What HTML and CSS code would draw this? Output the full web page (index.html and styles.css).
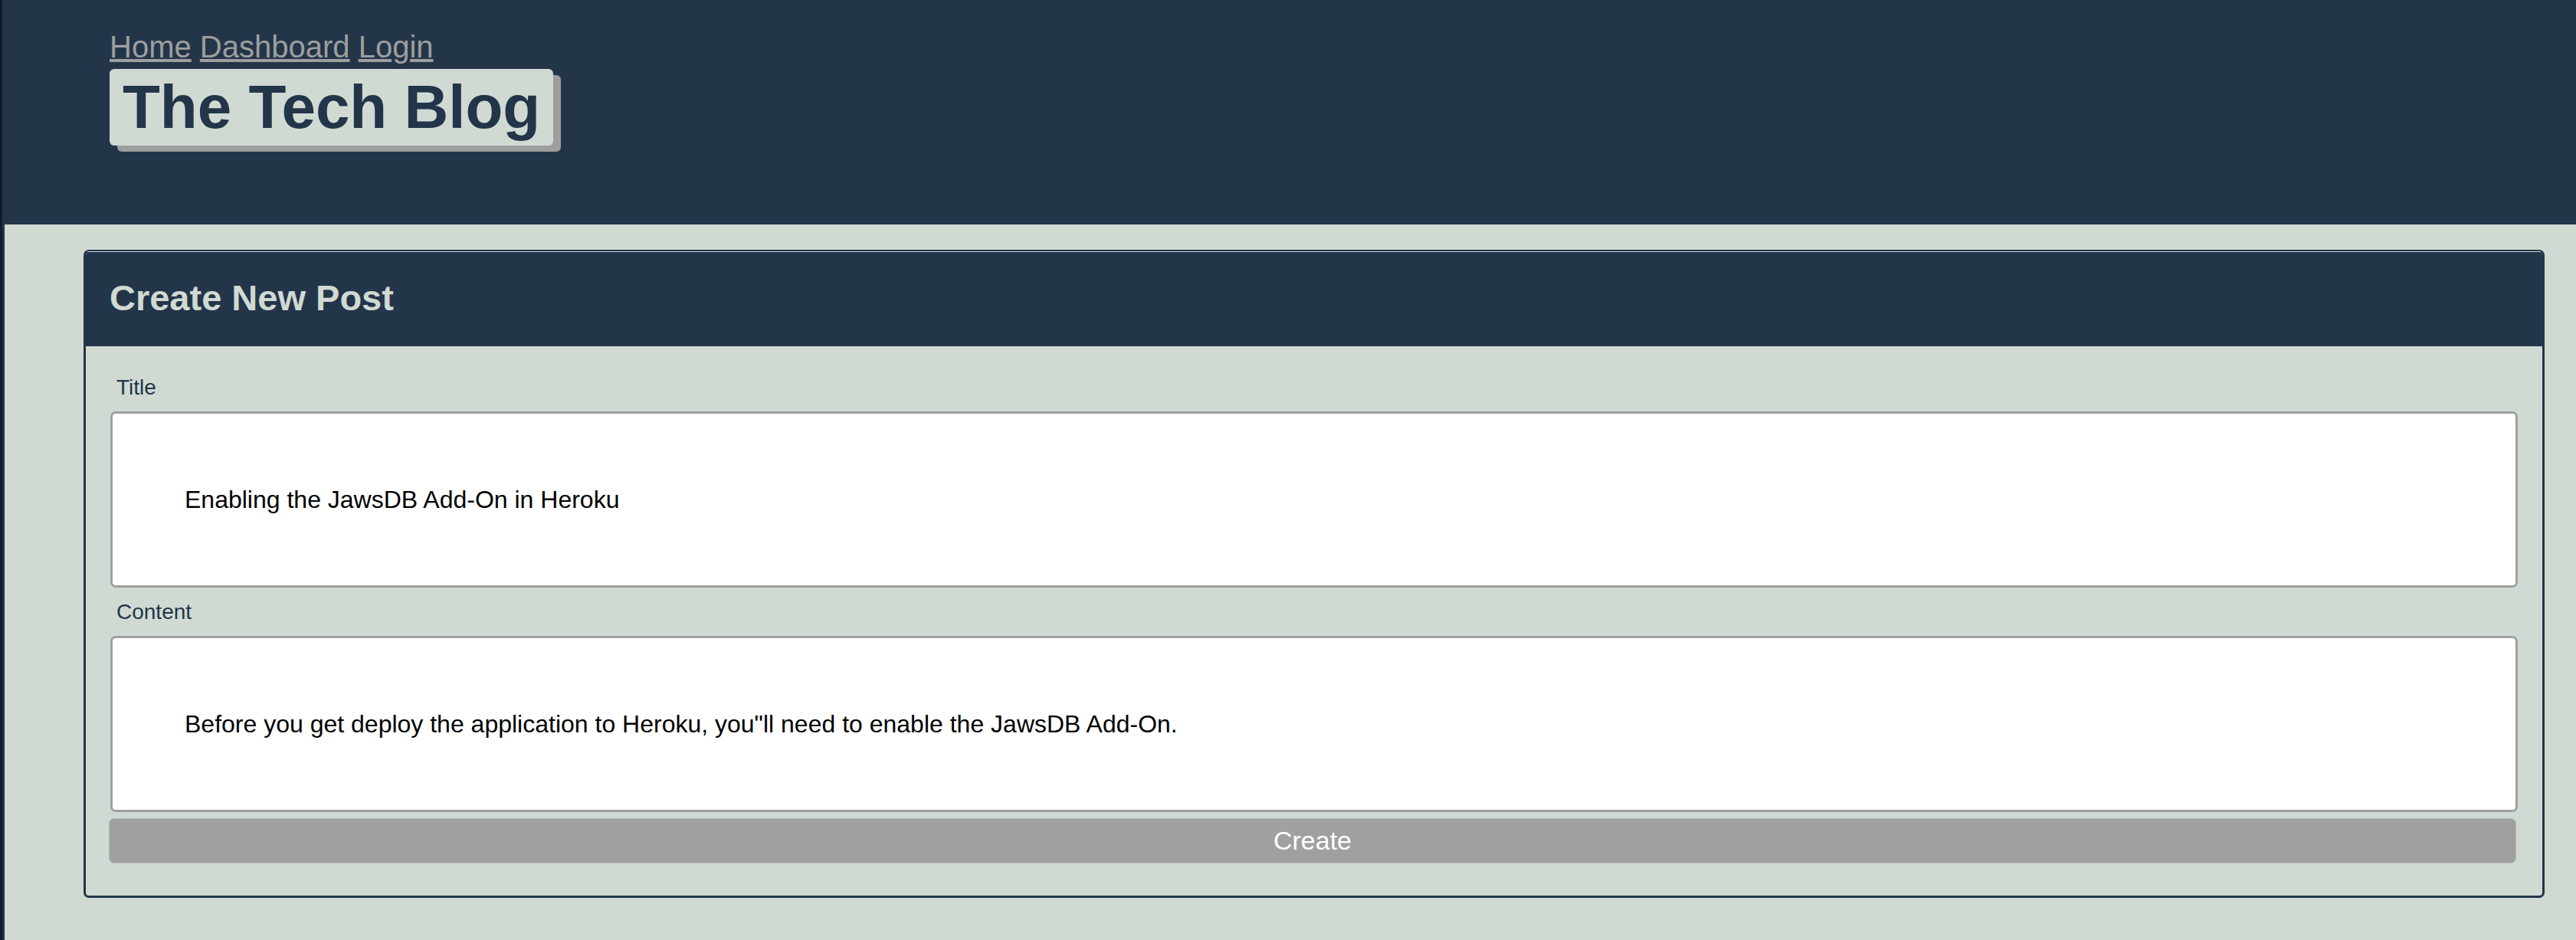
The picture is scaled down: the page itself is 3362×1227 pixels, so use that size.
FILE: index.html
```html
<!DOCTYPE html>
<html lang="en">
<head>
<meta charset="utf-8">
<title>The Tech Blog</title>
<link rel="stylesheet" href="styles.css">
</head>
<body>
<div class="page">
  <header class="site-header">
    <nav class="nav">
      <a href="#">Home</a> <a href="#">Dashboard</a> <a href="#">Login</a>
    </nav>
    <h1 class="brand">The Tech Blog</h1>
  </header>
  <main class="card">
    <h2 class="card-header">Create New Post</h2>
    <form class="card-body">
      <label class="label" for="title">Title</label>
      <input class="field field-title" id="title" type="text" value="Enabling the JawsDB Add-On in Heroku">
      <label class="label label-content" for="content">Content</label>
      <input class="field field-content" id="content" type="text" value="Before you get deploy the application to Heroku, you&quot;ll need to enable the JawsDB Add-On.">
      <button class="btn" type="button">Create</button>
    </form>
  </main>
</div>
</body>
</html>
```
FILE: styles.css
```css
html, body {
  margin: 0;
  padding: 0;
}
body {
  background: #d0dad3;
  font-family: "Liberation Sans", Arial, sans-serif;
  border-left: 3px solid #111a30;
  min-height: 1227px;
  box-sizing: border-box;
}
.page {
  border-left: 3px solid #233549;
  min-height: 1227px;
  display: flex;
  flex-direction: column;
}
.site-header {
  background: #233549;
  padding: 38px 0 103px 137px;
  display: flex;
  flex-direction: column;
  align-items: flex-start;
}
.nav {
  font-size: 40px;
  line-height: 46px;
}
.nav a {
  color: #9e9e9e;
  text-decoration: underline;
}
.brand {
  margin: 6px 0 0 0;
  background: #d0dad3;
  color: #233549;
  font-size: 80px;
  font-weight: 700;
  line-height: 92px;
  padding: 4px 17px 4px 17px;
  border-radius: 6px;
  box-shadow: 10px 8px 0 #9e9e9e;
}
.card {
  margin: 33px 41px 0 103px;
  border: 3px solid #233549;
  border-top-width: 2px;
  border-radius: 7px;
  overflow: hidden;
  display: flex;
  flex-direction: column;
}
.card-header {
  margin: 0;
  border-top: 1px solid #c9d6d6;
  background: #233549;
  color: #d0dad3;
  font-size: 47px;
  font-weight: 700;
  line-height: 54px;
  padding: 33px 31px 36px 31px;
}
.card-body {
  padding: 38px 32px 42px 32px;
  display: flex;
  flex-direction: column;
}
.label {
  font-size: 28px;
  line-height: 32px;
  color: #233549;
  margin: 0 0 15px 8px;
}
.label-content {
  margin-top: 16px;
}
.field {
  display: block;
  width: 100%;
  box-sizing: border-box;
  height: 230px;
  border: 3px solid #a0a0a0;
  border-radius: 7px;
  padding: 0 94px;
  margin: 0;
  font-family: "Liberation Sans", Arial, sans-serif;
  font-size: 32px;
  color: #000;
  background: #fff;
  outline: none;
}
.btn {
  margin: 8px 0 0 -2px;
  height: 59px;
  width: 100%;
  background: #a0a0a0;
  border: 1px solid #b3b8b6;
  border-radius: 7px;
  color: #fff;
  font-family: "Liberation Sans", Arial, sans-serif;
  font-size: 34px;
  padding: 0;
}
```
